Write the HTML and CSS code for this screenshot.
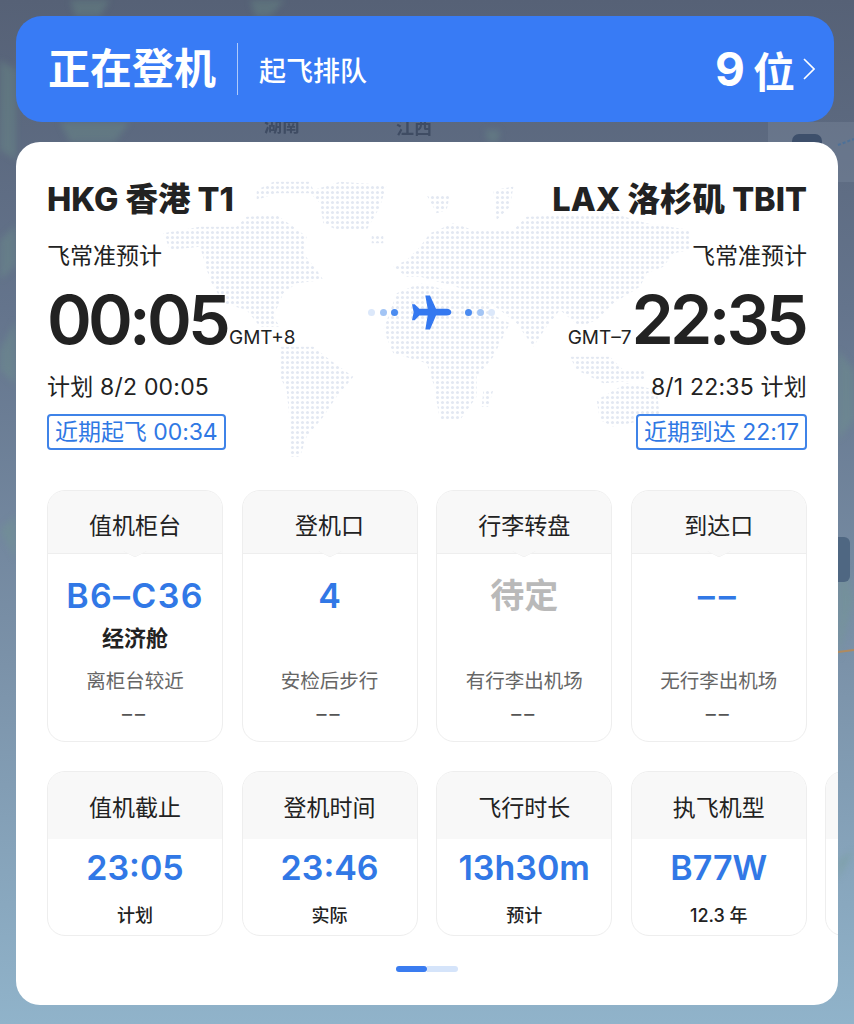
FILE: index.html
```html
<!DOCTYPE html>
<html lang="zh-CN">
<head>
    <meta charset="UTF-8">
    <meta name="viewport" content="width=device-width, initial-scale=1.0">
    <title>航班动态</title>
    <link rel="stylesheet" href="styles.css">
</head>
<body>
    <svg class="backdrop" viewBox="0 0 854 1024" aria-hidden="true">
        <rect x="768" y="122" width="86" height="60" fill="#7f8da0" opacity="0.35"/>
        <g class="land">
            <path d="M0 60 L16 70 L16 160 L0 150Z"/>
            <path d="M0 240 L16 225 L16 265 L0 280Z"/>
            <path d="M0 350 L16 320 L16 385 L0 370Z"/>
            <path d="M0 530 L16 515 L16 560Z"/>
            <path d="M838 350 L854 370 L854 420 L838 440Z"/>
            <path d="M838 540 L854 600 L838 660Z"/>
            <path d="M838 860 L854 850 L838 880Z"/>
            <path d="M70 0 L110 0 L100 16 L75 16Z"/>
            <path d="M250 0 L285 0 L270 16 L255 16Z"/>
            <path d="M60 122 L130 122 L115 142 L70 142Z"/>
            <path d="M485 130 L500 130 L498 142 L488 142Z"/>
        </g>
        <text class="map-label" x="264" y="132">湖南</text>
        <text class="map-label" x="396" y="134">江西</text>
        <rect x="792" y="134" width="30" height="20" rx="7" fill="#3d4f6b"/>
        <rect x="826" y="537" width="24" height="45" rx="6" fill="#4f6782"/>
        <path d="M838 652 L854 650" stroke="#b08a5f" stroke-width="2" fill="none"/>
        <path d="M838 145 L854 139" stroke="#4d7199" stroke-width="2" stroke-dasharray="3 2" fill="none"/>
    </svg>

    <div class="page">
        <div class="status-bar">
            <div class="status-main">正在登机</div>
            <div class="status-sub">起飞排队</div>
            <div class="status-rank">9<span class="rank-unit">位</span></div>
            <svg class="chevron" viewBox="0 0 12 22"><path d="M1 1 L11 11 L1 21" fill="none" stroke="#fff" stroke-width="1.6"/></svg>
        </div>

        <div class="card">
            <svg class="world" viewBox="-60 0 1620 900" aria-hidden="true">
                <defs>
                    <pattern id="dots" width="15" height="15" patternUnits="userSpaceOnUse">
                        <circle cx="7.5" cy="7.5" r="4.6" fill="#e3e8f2"/>
                    </pattern>
                </defs>
                <g fill="url(#dots)">
                    <path d="M230 60 L280 35 L390 35 L400 60 L480 35 L620 45 L600 110 L560 180 L470 180 L430 160 L420 100 L390 70 L290 70 L230 90Z"/>
                    <path d="M-50 190 L60 170 L170 170 L200 140 L290 135 L340 170 L380 200 L370 250 L410 300 L430 330 L350 340 L310 370 L280 440 L300 470 L240 470 L200 420 L130 400 L90 330 L60 230 L-30 240Z"/>
                    <path d="M575 195 L610 195 L610 220 L575 220Z"/>
                    <path d="M300 530 L400 530 L450 570 L520 620 L470 680 L430 740 L380 800 L360 860 L330 860 L330 760 L320 660 L300 620Z"/>
                    <path d="M650 370 L720 340 L800 360 L900 370 L950 440 L990 460 L940 560 L890 620 L890 680 L840 750 L780 750 L760 640 L740 580 L640 550 L610 480Z"/>
                    <path d="M910 660 L940 660 L925 710 L905 710Z"/>
                    <path d="M640 290 L680 270 L720 230 L750 190 L820 160 L880 180 L1000 180 L1040 140 L1300 130 L1400 160 L1530 180 L1530 240 L1480 250 L1450 290 L1400 310 L1380 350 L1300 400 L1250 450 L1200 470 L1140 420 L1100 470 L1060 530 L1010 460 L960 420 L860 360 L790 340 L720 320 L680 320Z"/>
                    <path d="M740 75 L810 75 L800 120 L770 130Z"/>
                    <path d="M940 60 L1000 50 L990 110 L950 150Z"/>
                    <path d="M1170 560 L1290 560 L1330 600 L1400 600 L1390 630 L1270 640 L1190 600Z"/>
                    <path d="M1250 690 L1340 640 L1430 660 L1440 740 L1300 770 L1260 750Z"/>
                </g>
            </svg>

            <div class="row airports">
                <div>HKG 香港 T1</div>
                <div>LAX 洛杉矶 TBIT</div>
            </div>
            <div class="row source">
                <div>飞常准预计</div>
                <div>飞常准预计</div>
            </div>
            <div class="row times">
                <div class="time-block">
                    <span class="time">00:05</span><span class="zone">GMT+8</span>
                </div>
                <div class="route">
                    <i class="dot dot-1"></i><i class="dot dot-2"></i><i class="dot dot-3"></i>
                    <svg class="plane" viewBox="0 0 120 102"><path d="M118 50 C118 44 112 40 104 40 L72 40 L54 0 L40 0 L47 40 L22 40 L8 26 L0 26 L5 50 L0 74 L8 74 L22 60 L47 60 L40 102 L54 102 L72 60 L104 60 C112 60 118 56 118 50Z" fill="#3478f0"/></svg>
                    <i class="dot dot-3"></i><i class="dot dot-2"></i><i class="dot dot-1"></i>
                </div>
                <div class="time-block time-block-end">
                    <span class="zone">GMT–7</span><span class="time">22:35</span>
                </div>
            </div>
            <div class="row plan">
                <div>计划 8/2 00:05</div>
                <div>8/1 22:35 计划</div>
            </div>
            <div class="row badges">
                <div class="badge">近期起飞 00:34</div>
                <div class="badge">近期到达 22:17</div>
            </div>

            <div class="tiles">
                <div class="tile">
                    <div class="tile-head notch">值机柜台</div>
                    <div class="tile-value first gate-range">B6–C36</div>
                    <div class="tile-sub">经济舱</div>
                    <div class="tile-hint">离柜台较近</div>
                    <div class="tile-dash">––</div>
                </div>
                <div class="tile">
                    <div class="tile-head notch">登机口</div>
                    <div class="tile-value first">4</div>
                    <div class="tile-sub"></div>
                    <div class="tile-hint">安检后步行</div>
                    <div class="tile-dash">––</div>
                </div>
                <div class="tile">
                    <div class="tile-head notch">行李转盘</div>
                    <div class="tile-value first muted">待定</div>
                    <div class="tile-sub"></div>
                    <div class="tile-hint">有行李出机场</div>
                    <div class="tile-dash">––</div>
                </div>
                <div class="tile">
                    <div class="tile-head notch">到达口</div>
                    <div class="tile-value first spaced">––</div>
                    <div class="tile-sub"></div>
                    <div class="tile-hint">无行李出机场</div>
                    <div class="tile-dash">––</div>
                </div>
            </div>

            <div class="tiles tiles-small">
                <div class="tile">
                    <div class="tile-head">值机截止</div>
                    <div class="tile-value">23:05</div>
                    <div class="tile-note">计划</div>
                </div>
                <div class="tile">
                    <div class="tile-head">登机时间</div>
                    <div class="tile-value">23:46</div>
                    <div class="tile-note">实际</div>
                </div>
                <div class="tile">
                    <div class="tile-head">飞行时长</div>
                    <div class="tile-value">13h30m</div>
                    <div class="tile-note">预计</div>
                </div>
                <div class="tile">
                    <div class="tile-head">执飞机型</div>
                    <div class="tile-value">B77W</div>
                    <div class="tile-note">12.3 年</div>
                </div>
                <div class="tile">
                    <div class="tile-head"></div>
                </div>
            </div>

            <div class="pager"><span class="pager-on"></span><span class="pager-off"></span></div>
        </div>
    </div>
</body>
</html>
```

FILE: styles.css
```css
html, body {
    margin: 0;
    height: 1024px;
    overflow: hidden;
}
body {
    position: relative;
    font-family: Inter, "Noto Sans CJK SC", sans-serif;
    color: #222;
    background: linear-gradient(180deg, #566176 0%, #64748c 30%, #7b92a9 65%, #90b3ca 100%);
}
.backdrop {
    position: absolute;
    left: 0;
    top: 0;
    width: 854px;
    height: 1024px;
}
.land {
    filter: blur(3px);
}
.land path {
    fill: #6f9a8c;
    opacity: 0.3;
}
.map-label {
    font-size: 18px;
    font-weight: 600;
    fill: #3f4c63;
}
.page {
    position: relative;
    padding: 16px;
}

/* top status bar */
.status-bar {
    display: flex;
    align-items: center;
    box-sizing: border-box;
    width: 818px;
    height: 106px;
    padding: 0 19px 0 32px;
    background: #387bf5;
    border-radius: 26px;
    color: #fff;
}
.status-main {
    font-size: 42px;
    font-weight: 600;
    line-height: 52px;
    padding-right: 21px;
    border-right: 1px solid rgba(255,255,255,0.6);
}
.status-sub {
    font-size: 27px;
    font-weight: 500;
    margin-left: 21px;
    flex: 1;
}
.status-rank {
    font-size: 46px;
    font-weight: 700;
    display: flex;
    align-items: center;
    gap: 8px;
}
.rank-unit {
    font-size: 42px;
}
.chevron {
    width: 12px;
    height: 22px;
    margin-left: 8px;
}

/* main card */
.card {
    position: relative;
    box-sizing: border-box;
    width: 822px;
    margin-top: 20px;
    padding: 36px 31px 33px;
    background: #fff;
    border-radius: 24px;
    overflow: hidden;
}
.world {
    position: absolute;
    left: 144px;
    top: 28px;
    width: 540px;
    height: 300px;
}
.row {
    position: relative;
    display: flex;
    justify-content: space-between;
    align-items: center;
}
.airports {
    font-size: 32.5px;
    font-weight: 800;
    line-height: 44px;
}
.source {
    margin-top: 17px;
    font-size: 23px;
    line-height: 34px;
}
.times {
    margin-top: 10px;
    height: 72px;
}
.time-block {
    display: flex;
    align-items: baseline;
}
.time {
    font-size: 68px;
    font-weight: 600;
    line-height: 72px;
    letter-spacing: -3.8px;
}
.zone {
    font-size: 19px;
    margin-left: 2px;
}
.time-block-end .zone {
    margin-left: 0;
}
.time-block-end .time {
    margin-right: 2px;
}
.route {
    display: flex;
    align-items: center;
    gap: 4.5px;
    margin-top: -14px;
}
.dot {
    width: 7px;
    height: 7px;
    border-radius: 50%;
}
.dot-1 { background: #dce8fa; }
.dot-2 { background: #a3c5f5; }
.dot-3 { background: #4a8bf0; }
.plane {
    width: 40px;
    height: 35px;
    margin: 0 9px;
}
.plan {
    margin-top: 16px;
    font-size: 23px;
    line-height: 32px;
    letter-spacing: 0.2px;
}
.badges {
    margin-top: 11px;
}
.badge {
    box-sizing: border-box;
    height: 36px;
    line-height: 33px;
    padding: 0 6px;
    border: 2px solid #3f83e8;
    border-radius: 4px;
    font-size: 23px;
    letter-spacing: -0.05px;
    color: #2f78e4;
    background: #fff;
}

/* info tiles */
.tiles {
    position: relative;
    display: grid;
    grid-template-columns: repeat(5, 176px);
    column-gap: 18.6px;
    margin-top: 40px;
}
.tiles-small {
    margin-top: 29px;
}
.tile {
    box-sizing: border-box;
    border: 1px solid #eee;
    border-radius: 18px;
    text-align: center;
    background: #fff;
    overflow: hidden;
}
.tile-head {
    position: relative;
    height: 62px;
    line-height: 70px;
    font-size: 23px;
    background: #f8f8f8;
    border-bottom: 1px solid #eee;
}
.notch::after {
    content: "";
    position: absolute;
    left: 50%;
    bottom: -7px;
    width: 16px;
    height: 16px;
    background: #f8f8f8;
    border-right: 1px solid #eee;
    border-bottom: 1px solid #eee;
    border-bottom-right-radius: 3px;
    transform: translateX(-50%) scaleY(0.5) rotate(45deg);
}
.tile-value {
    font-size: 34px;
    font-weight: 600;
    line-height: 44px;
    color: #3178e6;
}
.tile-value.first {
    margin-top: 21px;
    line-height: 42px;
}
.tile-value.muted {
    color: #b9b9b9;
}
.tile-value.spaced {
    letter-spacing: 4px;
}
.tile-value.gate-range {
    letter-spacing: 1.3px;
}
.tile-sub {
    height: 42px;
    line-height: 42px;
    font-size: 22px;
    font-weight: 700;
}
.tile-hint {
    line-height: 44px;
    font-size: 19.5px;
    color: #666;
}
.tile-dash {
    line-height: 22px;
    font-size: 20px;
    letter-spacing: 3px;
    color: #555;
    margin-bottom: 16px;
}
.tiles-small .tile-head {
    height: 67px;
    line-height: 72px;
    border-bottom: 0;
}
.tiles-small .tile-value {
    margin-top: 7px;
}
.tile-note {
    margin: 12px 0 5px;
    line-height: 28px;
    font-size: 18px;
    font-weight: 500;
}

.pager {
    display: flex;
    justify-content: center;
    margin-top: 30px;
}
.pager span {
    width: 31px;
    height: 6px;
}
.pager-on {
    background: #3a7cf0;
    border-radius: 3px;
}
.pager-off {
    background: #d5e4fa;
    border-radius: 0 3px 3px 0;
}
```
